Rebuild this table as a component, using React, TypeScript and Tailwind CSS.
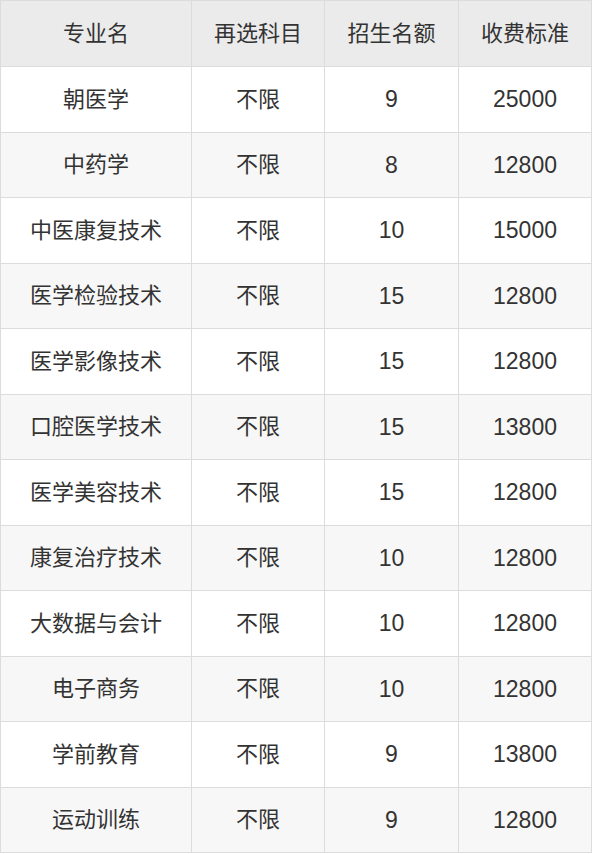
const ROWS: [string, string, string, string][] = [
  ["朝医学", "不限", "9", "25000"],
  ["中药学", "不限", "8", "12800"],
  ["中医康复技术", "不限", "10", "15000"],
  ["医学检验技术", "不限", "15", "12800"],
  ["医学影像技术", "不限", "15", "12800"],
  ["口腔医学技术", "不限", "15", "13800"],
  ["医学美容技术", "不限", "15", "12800"],
  ["康复治疗技术", "不限", "10", "12800"],
  ["大数据与会计", "不限", "10", "12800"],
  ["电子商务", "不限", "10", "12800"],
  ["学前教育", "不限", "9", "13800"],
  ["运动训练", "不限", "9", "12800"],
];

const HEADERS = ["专业名", "再选科目", "招生名额", "收费标准"];

export default function App() {
  return (
    <div className="bg-white w-[592px] h-[854px] font-['Helvetica','Liberation_Sans','Noto_Sans_CJK_SC',sans-serif] text-[#333]">
      <table className="w-[591px] border-collapse table-fixed text-[22px]">
        <colgroup>
          <col className="w-[191px]" />
          <col className="w-[133px]" />
          <col className="w-[134px]" />
          <col className="w-[133px]" />
        </colgroup>
        <thead>
          <tr className="h-[66px] bg-[#ebebeb]">
            {HEADERS.map((h) => (
              <th
                key={h}
                className="border border-[#dcdcdc] font-normal text-center align-middle"
              >
                {h}
              </th>
            ))}
          </tr>
        </thead>
        <tbody>
          {ROWS.map((row, i) => (
            <tr
              key={row[0]}
              className={i % 2 === 0 ? "h-[65.5px] bg-white" : "h-[65.5px] bg-[#f7f7f7]"}
            >
              {row.map((cell, j) => (
                <td
                  key={j}
                  className={
                    j >= 2
                      ? "border border-[#dcdcdc] text-center align-middle text-[23px]"
                      : "border border-[#dcdcdc] text-center align-middle"
                  }
                >
                  {cell}
                </td>
              ))}
            </tr>
          ))}
        </tbody>
      </table>
    </div>
  );
}
